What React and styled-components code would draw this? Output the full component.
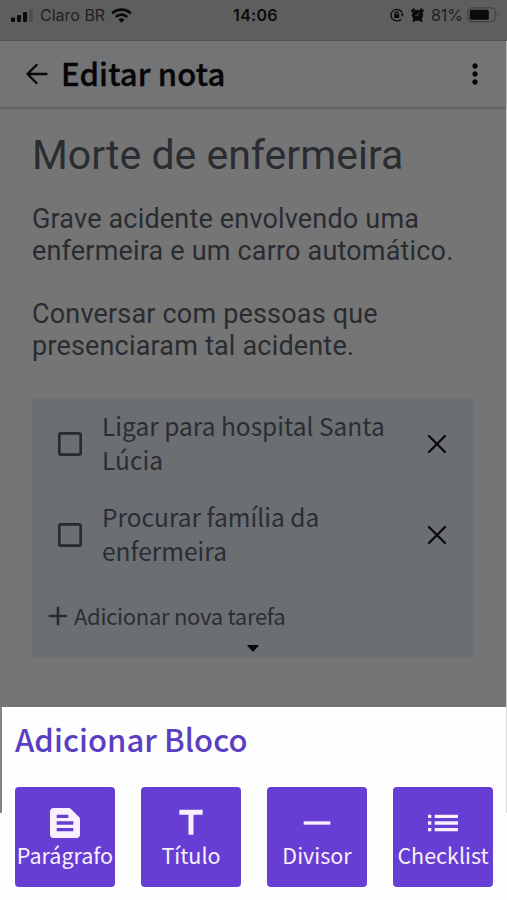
// external modules
import styled, { createGlobalStyle } from 'styled-components';
import {
  MdAdd,
  MdCheckBoxOutlineBlank,
  MdHorizontalRule,
  MdList,
  MdMoreVert,
  MdTextSnippet,
  MdTitle,
} from 'react-icons/md';

const tasks = ['Ligar para hospital Santa Lúcia', 'Procurar família da enfermeira'];

const blocks = [
  { label: 'Parágrafo', Icon: MdTextSnippet },
  { label: 'Título', Icon: MdTitle },
  { label: 'Divisor', Icon: MdHorizontalRule },
  { label: 'Checklist', Icon: MdList },
];

const StatusBar = () => (
  <StatusWrap>
    <StatusSide>
      <svg width="23" height="13" viewBox="0 0 23 13">
        <rect x="0" y="8.5" width="4" height="4.5" rx="1" />
        <rect x="6" y="6" width="4" height="7" rx="1" />
        <rect x="12" y="3" width="4" height="10" rx="1" />
        <rect x="18" y="0" width="4" height="13" rx="1" fill="#4f4f50" />
      </svg>
      <Carrier>Claro BR</Carrier>
      <svg width="21" height="15" viewBox="0 0 21 15" fill="none" stroke="#0b0b0c" strokeWidth="2.7">
        <path d="M1.2 5.4C6.4 0.3 14.6 0.3 19.8 5.4" />
        <path d="M4.7 9C8 5.9 13 5.9 16.3 9" />
        <path d="M7.4 11.6Q10.5 8.9 13.6 11.6L10.5 14.8Z" fill="#0b0b0c" stroke="none" />
      </svg>
    </StatusSide>
    <Clock>14:06</Clock>
    <StatusSide $end>
      <svg width="14" height="14" viewBox="0 0 14 14" fill="none" stroke="#0b0b0c" strokeWidth="1.3">
        <path d="M12.4 5.5A5.8 5.8 0 1 0 11 11.2" />
        <path d="M10.6 6.2h3.4l-1.7 2.6z" fill="#0b0b0c" stroke="none" />
        <rect x="4.2" y="6.3" width="5" height="3.7" fill="#0b0b0c" stroke="none" />
        <path d="M5.2 6.5V5.3a1.5 1.5 0 0 1 3 0v1.2" />
      </svg>
      <svg width="13" height="14" viewBox="0 0 13 14">
        <circle cx="6.5" cy="7.3" r="5.6" fill="#0b0b0c" />
        <path
          d="M0.7 3.6L3.6 0.8M12.3 3.6L9.4 0.8M2 13.5l2-2M11 13.5l-2-2"
          stroke="#0b0b0c"
          strokeWidth="2.4"
        />
        <path d="M7.8 5L6.4 7.7H4.3" fill="none" stroke="#4c4c4e" />
      </svg>
      <Percent>81%</Percent>
      <svg width="33" height="16" viewBox="0 0 33 16">
        <rect x="0.8" y="0.8" width="27.5" height="13.9" rx="4" fill="none" stroke="#444446" strokeWidth="1.2" />
        <rect x="2.8" y="2.7" width="19" height="10" rx="1.5" />
        <path d="M30 5.3q2.3 2.4 0 5z" fill="#444446" />
      </svg>
    </StatusSide>
  </StatusWrap>
);

const Task = ({ text }) => (
  <TaskRow>
    <MdCheckBoxOutlineBlank size={32} color="#292a2d" />
    <TaskText>{text}</TaskText>
    <svg width="20" height="20" viewBox="0 0 20 20" stroke="#09090a" strokeWidth="2.3" strokeLinecap="round">
      <path d="M2 2L18 18M18 2L2 18" />
    </svg>
  </TaskRow>
);

const App = () => {
  return (
    <Page>
      <GlobalStyle />
      <StatusBar />
      <Screen>
        <Header>
          <svg
            width="22"
            height="22"
            viewBox="0 0 22 22"
            fill="none"
            stroke="#09090b"
            strokeWidth="2.3"
            strokeLinecap="round"
            strokeLinejoin="round"
          >
            <path d="M20.5 11H1.7M10.5 2L1.5 11L10.5 20" />
          </svg>
          <HeaderTitle>Editar nota</HeaderTitle>
          <MdMoreVert size={32} color="#060607" />
        </Header>
        <Note>
          <NoteTitle>Morte de enfermeira</NoteTitle>
          <Paragraph>
            Grave acidente envolvendo uma
            <br />
            enfermeira e um carro automático.
          </Paragraph>
          <Paragraph>
            Conversar com pessoas que
            <br />
            presenciaram tal acidente.
          </Paragraph>
          <Checklist>
            {tasks.map((text) => (
              <Task key={text} text={text} />
            ))}
            <NewTask>
              <MdAdd size={32} />
              <span>Adicionar nova tarefa</span>
            </NewTask>
            <Expand>
              <svg width="12" height="7" viewBox="0 0 12 7">
                <path d="M1 0H11Q12 .3 11.5 1L7 6Q6 7 5 6L.5 1Q0 .3 1 0Z" fill="#080809" />
              </svg>
            </Expand>
          </Checklist>
        </Note>
      </Screen>
      <SheetRow>
        <Edge $width="2px" $color="#858585" />
        <Sheet>
          <SheetTitle>Adicionar Bloco</SheetTitle>
          <Blocks>
            {blocks.map(({ label, Icon }) => (
              <Block key={label}>
                <Icon size={40} />
                <BlockLabel>{label}</BlockLabel>
              </Block>
            ))}
          </Blocks>
        </Sheet>
        <Edge $width="1px" $color="#dcdcdc" />
      </SheetRow>
    </Page>
  );
};

export default App;

const GlobalStyle = createGlobalStyle`
  * {
    box-sizing: border-box;
  }
  body {
    margin: 0;
    background: #fefefe;
    font-family: 'Noto Sans CJK JP', 'Noto Sans', sans-serif;
  }
  h1, h2, p {
    margin: 0;
  }
  svg {
    flex: none;
    display: block;
  }
`;

const Page = styled.div`
  width: 507px;
  height: 900px;
  overflow: hidden;
  display: flex;
  flex-direction: column;
`;

const StatusWrap = styled.div`
  height: 41px;
  flex: none;
  display: grid;
  grid-template-columns: 1fr auto 1fr;
  align-items: start;
  padding: 5px 7px 0 11px;
  background: #5e5e5f;
  border-bottom: 1px solid #565657;
  font-family: Inter, sans-serif;
  line-height: 20px;
  color: #0b0b0c;
  fill: #0b0b0c;
`;

const StatusSide = styled.div`
  display: flex;
  align-items: center;
  height: 20px;
  gap: ${(props) => (props.$end ? '7px' : '6px')};
  justify-content: ${(props) => (props.$end ? 'flex-end' : 'flex-start')};
`;

const Carrier = styled.span`
  font-size: 16px;
  color: #202022;
`;

const Clock = styled.span`
  font-size: 16px;
  font-weight: 600;
  letter-spacing: 0.3px;
`;

const Percent = styled.span`
  font-size: 16px;
  color: #202022;
  margin-right: -3px;
`;

const Screen = styled.main`
  height: 666px;
  flex: none;
  background: #757575;
  border-right: 1px solid #c9c9c9;
`;

const Header = styled.header`
  height: 66px;
  display: flex;
  align-items: center;
  padding: 0 15px 0 26px;
  background: #727476;
  box-shadow: 0 1px 3px rgba(0, 0, 0, 0.3);
`;

const HeaderTitle = styled.h1`
  flex: 1;
  margin: -3px 0 0 13px;
  font-size: 31px;
  font-weight: 500;
  line-height: 40px;
  letter-spacing: 0.15px;
  -webkit-text-stroke: 0.4px;
  color: #060608;
`;

const Note = styled.section`
  padding: 25px 32px 0;
  font-family: Roboto, sans-serif;
  color: #292c31;
`;

const NoteTitle = styled.h2`
  font-size: 41px;
  font-weight: 400;
  line-height: 46px;
`;

const Paragraph = styled.p`
  margin: 25px 0 31px;
  font-size: 27px;
  line-height: 32px;
  letter-spacing: 0.18px;
  white-space: nowrap;

  & + & {
    margin-top: 0;
  }
`;

const Checklist = styled.div`
  width: 442px;
  height: 259px;
  margin-top: 37px;
  background: #6c6f72;
  font-family: 'Noto Sans CJK JP', 'Noto Sans', sans-serif;
  color: #2b2d35;
`;

const TaskRow = styled.div`
  height: 90px;
  display: flex;
  align-items: center;
  padding: 0 27px 0 22px;

  & + & {
    height: 91px;
    border-top: 1px solid #686b6f;
  }
`;

const TaskText = styled.p`
  flex: 1;
  margin: -2px 0 0 16px;
  padding-right: 30px;
  font-size: 24.5px;
  line-height: 34px;
`;

const NewTask = styled.div`
  display: flex;
  align-items: center;
  height: 65px;
  padding: 7px 0 0 10px;
  font-size: 22px;
  letter-spacing: -0.3px;

  span {
    margin-top: -3px;
  }
`;

const Expand = styled.div`
  display: flex;
  justify-content: center;
`;

const SheetRow = styled.footer`
  flex: 1;
  display: flex;
  align-items: flex-start;
`;

const Edge = styled.span`
  width: ${(props) => props.$width};
  height: 106px;
  background: ${(props) => props.$color};
`;

const Sheet = styled.div`
  flex: 1;
  padding: 11px 13px 0;
`;

const SheetTitle = styled.h2`
  font-size: 31px;
  font-weight: 500;
  line-height: 42px;
  letter-spacing: 0.05px;
  color: #5a3fc0;
`;

const Blocks = styled.div`
  display: flex;
  justify-content: space-between;
  margin-top: 27px;
`;

const Block = styled.button`
  width: 100px;
  height: 100px;
  display: flex;
  flex-direction: column;
  align-items: center;
  padding: 16px 0 0;
  border: 0;
  border-radius: 4px;
  background: #673ed3;
  color: #f8f0fd;
  font-family: inherit;
`;

const BlockLabel = styled.span`
  margin-top: -2px;
  font-size: 21.5px;
  line-height: 28px;
  white-space: nowrap;
`;
